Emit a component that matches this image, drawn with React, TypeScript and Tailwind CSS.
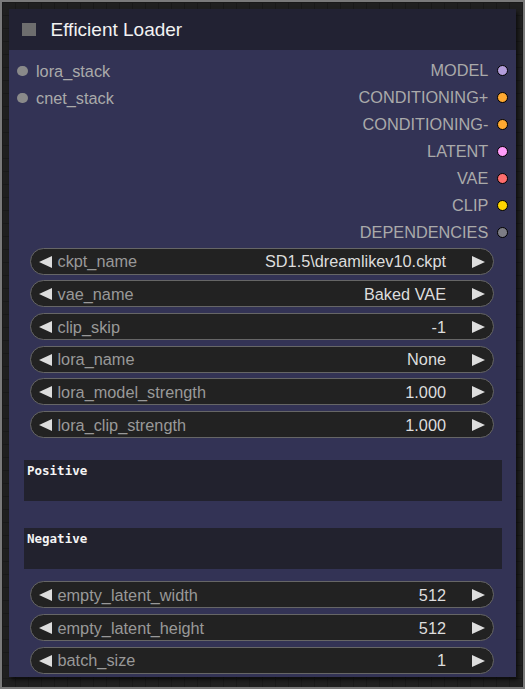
import React from 'react';

type Slot = { label: string; color: string };

const INPUTS = ['lora_stack', 'cnet_stack'];

const OUTPUTS: Slot[] = [
  { label: 'MODEL', color: '#b39ddb' },
  { label: 'CONDITIONING+', color: '#ffa931' },
  { label: 'CONDITIONING-', color: '#ffa931' },
  { label: 'LATENT', color: '#ff9cf9' },
  { label: 'VAE', color: '#ff6e6e' },
  { label: 'CLIP', color: '#ffd500' },
  { label: 'DEPENDENCIES', color: '#7d7d85' },
];

const TOP_WIDGETS: [string, string][] = [
  ['ckpt_name', 'SD1.5\\dreamlikev10.ckpt'],
  ['vae_name', 'Baked VAE'],
  ['clip_skip', '-1'],
  ['lora_name', 'None'],
  ['lora_model_strength', '1.000'],
  ['lora_clip_strength', '1.000'],
];

const BOTTOM_WIDGETS: [string, string][] = [
  ['empty_latent_width', '512'],
  ['empty_latent_height', '512'],
  ['batch_size', '1'],
];

const Arrow: React.FC<{ dir: 'left' | 'right' }> = ({ dir }) => (
  <svg width="13" height="12" viewBox="0 0 13 12" className="shrink-0">
    {dir === 'left' ? <polygon points="13,0 13,12 0,6" fill="#dddddd" /> : <polygon points="0,0 0,12 13,6" fill="#dddddd" />}
  </svg>
);

const Widget: React.FC<{ label: string; value: string }> = ({ label, value }) => (
  <div className="ml-[20.5px] flex h-[27px] w-[464px] items-center rounded-full border border-[#666] bg-[#222] pl-[8px] pr-[7.5px] pt-[1px] text-[16.3px] leading-none">
    <Arrow dir="left" />
    <span className="ml-[6px] flex-1 text-[#999]">{label}</span>
    <span className="text-[#ddd]">{value}</span>
    <span className="ml-[26px]">
      <Arrow dir="right" />
    </span>
  </div>
);

const TextBox: React.FC<{ text: string }> = ({ text }) => (
  <div className="ml-[15px] h-[41px] w-[478px] bg-[#22222e] pl-[3px] pt-[3px] text-[12.5px] font-semibold leading-[15px] text-[#f4f4f4] [font-family:'DejaVu_Sans_Mono',monospace]">
    {text}
  </div>
);

export default function App() {
  return (
    <div className="h-[689px] w-[525px] border-2 border-[#7a7a7a] bg-[#202020] bg-[linear-gradient(to_right,#1a1a1a_1px,transparent_1px),linear-gradient(to_bottom,#1a1a1a_1px,transparent_1px)] bg-[size:13px_13px] pl-[7px] pt-[7px] [font-family:'Liberation_Sans',Arial,sans-serif]">
      <div className="flex h-[668px] w-[507px] flex-col bg-[#333355] shadow-[2px_3px_4px_rgba(0,0,0,0.6)]">
        {/* Title */}
        <div className="flex h-[41px] items-center bg-[#222233] pl-[13px]">
          <div className="h-[13.5px] w-[13.5px] bg-[#6e6e6e]" />
          <span className="ml-[15px] text-[19px] leading-none text-[#f2f2f2]">Efficient Loader</span>
        </div>

        {/* Slots */}
        <div className="flex pt-[7.5px]">
          <div className="flex flex-1 flex-col">
            {INPUTS.map((s) => (
              <div key={s} className="flex h-[27px] items-center pl-[8px] text-[16.3px] text-[#aaa]">
                <div className="h-[10.5px] w-[10.5px] rounded-full bg-[#8a8a8a]" />
                <span className="ml-[8.5px]">{s}</span>
              </div>
            ))}
          </div>
          <div className="-mt-[1px] flex flex-col items-end">
            {OUTPUTS.map((s) => (
              <div key={s.label} className="flex h-[27px] items-center pr-[7.7px] text-[16.3px] text-[#aaa]">
                <span>{s.label}</span>
                <div className="ml-[9px] h-[11px] w-[11px] rounded-full border border-black" style={{ backgroundColor: s.color }} />
              </div>
            ))}
          </div>
        </div>

        {/* Widgets */}
        <div className="mt-[2px] flex flex-col gap-[5.7px]">
          {TOP_WIDGETS.map(([l, v]) => (
            <Widget key={l} label={l} value={v} />
          ))}
        </div>

        <div className="mt-[22px]">
          <TextBox text="Positive" />
        </div>
        <div className="mt-[26.7px]">
          <TextBox text="Negative" />
        </div>

        <div className="mt-[12.5px] flex flex-col gap-[5.7px]">
          {BOTTOM_WIDGETS.map(([l, v]) => (
            <Widget key={l} label={l} value={v} />
          ))}
        </div>
      </div>
    </div>
  );
}
